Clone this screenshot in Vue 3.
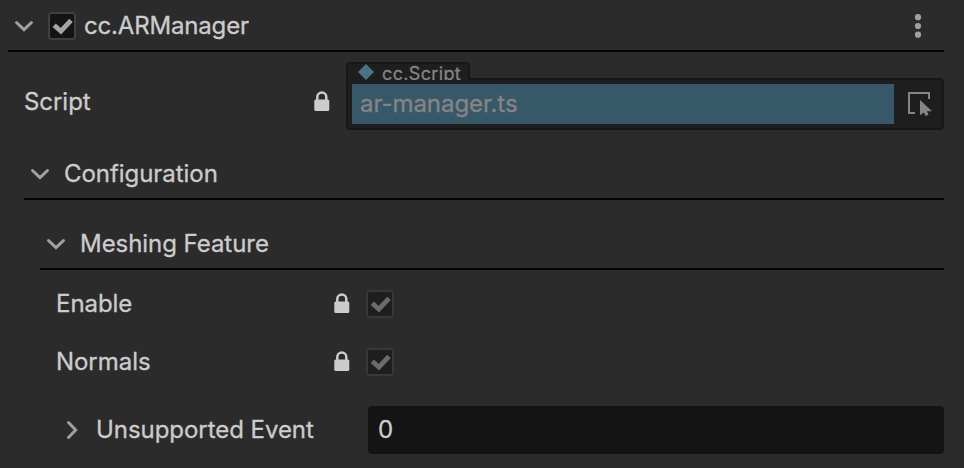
<script setup>
import { ref } from 'vue'

const features = ref([
  { label: 'Enable', checked: true },
  { label: 'Normals', checked: true },
])
const lockBody = 'M2 8.5h12A1.5 1.5 0 0 1 15.3 10v8.5A1.5 1.5 0 0 1 13.8 20H1.8A1.5 1.5 0 0 1 .3 18.5V10A1.5 1.5 0 0 1 2 8.5z'
const lockShackle = 'M3.3 9.5V6a4.5 4.5 0 0 1 9 0v3.5'
const checkPath = 'M6.2 13.2 12.9 19.2 23 8.4'
</script>

<template>
  <main class="inspector">
    <header class="section component">
      <svg class="chevron" viewBox="0 0 20 12"><path d="M2.5 2.5 10 9.7l7.5-7.2" /></svg>
      <span class="checkbox active">
        <svg viewBox="0 0 28 28"><path :d="checkPath" /></svg>
      </span>
      <h1 class="title">cc.ARManager</h1>
      <svg class="more" viewBox="0 0 8 24">
        <circle cx="4" cy="3.2" r="3.1" /><circle cx="4" cy="12" r="3.1" /><circle cx="4" cy="20.7" r="3.1" />
      </svg>
    </header>

    <div class="script-row">
      <span class="label script-label">Script</span>
      <svg class="lock" viewBox="0 0 16 20"><path class="body" :d="lockBody" /><path class="shackle" :d="lockShackle" /></svg>
      <div class="asset">
        <div class="asset-type">
          <svg class="diamond" viewBox="0 0 16 16"><path d="M8 0l8 8-8 8-8-8z" /></svg>
          <span class="type-name">cc.Script</span>
        </div>
        <div class="asset-value"><span class="asset-name">ar-manager.ts</span></div>
        <svg class="picker" viewBox="0 0 24 24">
          <path class="frame" d="M21 7V1H1v20h6" />
          <path class="cursor" d="M12 8v15.3l3.8-2.8 1.8 3.5 3-1.3-1.8-3.5H24z" />
        </svg>
      </div>
    </div>

    <div class="section configuration">
      <svg class="chevron" viewBox="0 0 20 12"><path d="M2.5 2.5 10 9.7l7.5-7.2" /></svg>
      <h2 class="title">Configuration</h2>
    </div>

    <div class="section meshing">
      <svg class="chevron" viewBox="0 0 20 12"><path d="M2.5 2.5 10 9.7l7.5-7.2" /></svg>
      <h3 class="title">Meshing Feature</h3>
    </div>

    <div class="features">
      <div v-for="feature in features" :key="feature.label" class="feature">
        <span class="label">{{ feature.label }}</span>
        <svg class="lock" viewBox="0 0 16 20"><path class="body" :d="lockBody" /><path class="shackle" :d="lockShackle" /></svg>
        <span class="checkbox">
          <svg v-if="feature.checked" viewBox="0 0 28 28"><path :d="checkPath" /></svg>
        </span>
      </div>
    </div>

    <div class="event-row">
      <svg class="chevron-right" viewBox="0 0 12 20"><path d="M2.5 2.5 9.7 10l-7.2 7.5" /></svg>
      <span class="label">Unsupported Event</span>
      <div class="count">0</div>
    </div>
  </main>
</template>

<style>
body {
  background: #2b2b2b;
}
</style>

<style scoped>
.inspector {
  box-sizing: border-box;
  height: 468px;
  overflow: hidden;
  padding-right: 20px;
  background: #2b2b2b;
  color: #cccccc;
  font: 400 24px/32px Inter, sans-serif;
  letter-spacing: -0.05px;
  -webkit-text-stroke: 0.3px currentColor;
  white-space: nowrap;
}

.section {
  display: flex;
  align-items: center;
  height: 50px;
  border-bottom: 2px solid #050505;
}

.title {
  margin: 2px 0 0;
  font: inherit;
}

.component {
  margin-left: 8px;
  padding-left: 6px;
}

.component .title {
  letter-spacing: -0.17px;
}

.component .checkbox {
  margin: 2px 8px 0 14px;
}

.chevron {
  width: 20px;
  height: 12px;
  margin-top: 2px;
}

.chevron-right {
  width: 12px;
  height: 20px;
}

.chevron path,
.chevron-right path {
  fill: none;
  stroke: #a0a0a0;
  stroke-width: 3;
  stroke-linecap: round;
}

.more {
  width: 8px;
  height: 24px;
  margin: 2px 22px 0 auto;
  fill: #a0a0a0;
}

.checkbox {
  box-sizing: border-box;
  width: 28px;
  height: 28px;
  border: 2px solid #383838;
  border-radius: 4px;
  background: #1e1e1e;
}

.checkbox.active {
  border-color: #404040;
  background: #141414;
}

.checkbox svg {
  display: block;
  width: 28px;
  height: 28px;
  margin: -2px;
}

.checkbox path {
  fill: none;
  stroke: #6b6b6b;
  stroke-width: 4.8;
}

.checkbox.active path {
  stroke: #a5a5a5;
}

.lock {
  width: 16px;
  height: 20px;
}

.lock .body {
  fill: #cccccc;
}

.lock .shackle {
  fill: none;
  stroke: #cccccc;
  stroke-width: 2.5;
}

.script-row {
  display: flex;
  align-items: center;
  height: 52px;
  padding: 26px 0 18px 24px;
}

.script-label {
  width: 290px;
  margin-top: -4px;
}

.script-row .lock {
  margin: -6px 16px 0 0;
}

.asset {
  position: relative;
  display: flex;
  align-items: center;
  box-sizing: border-box;
  width: 598px;
  height: 52px;
  padding: 4px;
  border: 2px solid #171717;
  border-radius: 4px;
  background: #1e1e1e;
}

.asset-type {
  position: absolute;
  top: -18px;
  left: -2px;
  display: flex;
  box-sizing: border-box;
  width: 124px;
  height: 18px;
  padding-left: 10px;
  overflow: hidden;
  border: solid #171717;
  border-width: 2px 2px 0;
  border-radius: 4px 4px 0 0;
  background: #1e1e1e;
  color: #858585;
  font-size: 18px;
  line-height: 20px;
  letter-spacing: 0.35px;
}

.diamond {
  flex: none;
  width: 16px;
  height: 16px;
  margin-right: 8px;
  fill: #4c7384;
}

.asset-value {
  width: 534px;
  height: 40px;
  padding-left: 8px;
  background: #375868;
  color: #858585;
  line-height: 40px;
}

.picker {
  width: 24px;
  height: 24px;
  margin-left: 14px;
}

.picker .frame {
  fill: none;
  stroke: #858585;
  stroke-width: 2;
}

.picker .cursor {
  fill: #858585;
}

.configuration {
  margin-left: 24px;
  padding-left: 6px;
}

.configuration .title,
.meshing .title {
  margin-left: 14px;
}

.meshing {
  margin: 18px 0 0 40px;
  padding-left: 6px;
}

.features {
  display: flex;
  flex-direction: column;
  gap: 10px;
  padding: 10px 0 0 56px;
}

.feature {
  display: flex;
  align-items: center;
  height: 48px;
}

.feature .label {
  width: 278px;
}

.feature .lock {
  margin: -2px 16px 0 0;
}

.event-row {
  display: flex;
  align-items: center;
  height: 48px;
  margin-top: 20px;
  padding-left: 66px;
}

.event-row .label {
  width: 272px;
  margin-left: 18px;
}

.count {
  flex: 1;
  padding-left: 10px;
  border-radius: 4px;
  background: #141414;
  line-height: 48px;
}
</style>
